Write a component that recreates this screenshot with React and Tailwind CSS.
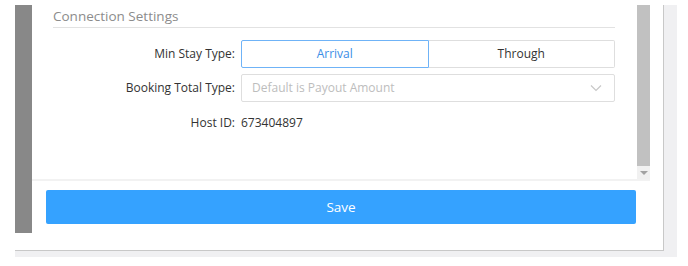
import React from 'react';

const ChevronDown = () => (
  <svg width="12" height="8" viewBox="0 0 12 8" fill="none" stroke="#c8c8c8" strokeWidth="1.2">
    <polyline points="1 1.5 6 6.5 11 1.5" />
  </svg>
);

export default function App() {
  return (
    <div className="w-[688px] h-[266px] bg-white pt-[5px] pl-[15px] overflow-hidden" style={{ fontFamily: '"Open Sans", "Noto Sans", sans-serif' }}>
      <div className="w-[662px] h-[252px] bg-[#f0f0f2]">
        <div className="w-[649px] h-[246px] bg-white border-r border-b border-[#c8c8c8] flex">
          {/* dark side bar */}
          <div className="w-[17px] h-[228px] bg-[#888888] shrink-0" />

          <div className="w-[618px] flex flex-col">
            {/* scroll area */}
            <div className="h-[176px] flex border-b-2 border-[#f2f2f2]">
              <div className="w-[605px] pl-[21px] pr-[22px] pt-[2px]">
                <div className="text-[13.5px] leading-[19px] text-[#8c8c8c] pb-[1px] border-b border-[#e2e2e2]">
                  Connection Settings
                </div>

                <div className="mt-[12px] flex items-center text-[12px] text-[#333]">
                  <div className="w-[188px] text-right pr-[6px]">Min Stay Type:</div>
                  <div className="flex-1 flex h-[28px]">
                    <div className="flex-1 flex items-center justify-center border border-[#6fb3f7] rounded-l-[2px] text-[#3a8ee6]">
                      Arrival
                    </div>
                    <div className="flex-1 flex items-center justify-center border border-l-0 border-[#dedede] rounded-r-[2px] text-[#333]">
                      Through
                    </div>
                  </div>
                </div>

                <div className="mt-[6px] flex items-center text-[12px] text-[#333]">
                  <div className="w-[188px] text-right pr-[6px]">Booking Total Type:</div>
                  <div className="flex-1 h-[28px] border border-[#dedede] rounded-[2px] flex items-center justify-between pl-[10px] pr-[12px]">
                    <span className="text-[#bdbdbd]">Default is Payout Amount</span>
                    <ChevronDown />
                  </div>
                </div>

                <div className="mt-[12px] flex items-center text-[12px] text-[#333]">
                  <div className="w-[188px] text-right pr-[6px]">Host ID:</div>
                  <div>673404897</div>
                </div>
              </div>

              {/* scrollbar */}
              <div className="w-[13px] bg-[#f1f1f1] flex flex-col">
                <div className="h-[161px] bg-[#c1c1c1]" />
                <div className="flex-1 flex items-center justify-center">
                  <div className="w-0 h-0 border-l-[4px] border-r-[4px] border-t-[4px] border-l-transparent border-r-transparent border-t-[#a3a3a3]" />
                </div>
              </div>
            </div>

            {/* footer */}
            <div className="pt-[9px] px-[14px]">
              <button className="w-full h-[34px] bg-[#35a2ff] rounded-[2px] text-white text-[13.5px]">
                Save
              </button>
            </div>
          </div>
        </div>
      </div>
    </div>
  );
}
